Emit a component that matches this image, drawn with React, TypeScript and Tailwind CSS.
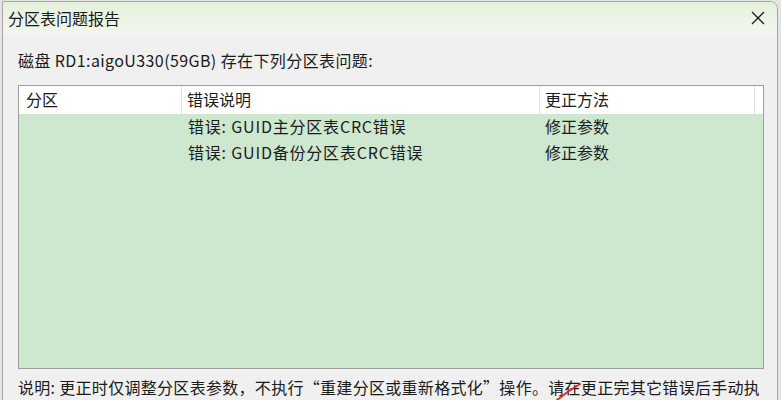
import React from 'react';

const rows = [
  { part: '', desc: '错误: GUID主分区表CRC错误', fix: '修正参数' },
  { part: '', desc: '错误: GUID备份分区表CRC错误', fix: '修正参数' },
];

const font = { fontFamily: '"Noto Sans CJK SC", "Noto Sans", sans-serif' };

const App: React.FC = () => {
  return (
    <div className="w-[781px] h-[400px] bg-[#e4e4e4] pl-[2px] pt-[1px] overflow-hidden relative" style={font}>
      <div className="w-[776px] h-[420px] flex flex-col bg-[#f0f0f0] border border-[#a6a6a6] rounded-tr-[8px] overflow-hidden text-[#1b1b1b]">
        {/* Title bar */}
        <div className="h-[32px] shrink-0 flex items-center justify-between pl-[5px] pr-[12px] bg-gradient-to-b from-[#e5f2da] to-[#f2f6ee]">
          <span className="text-[16px] leading-none">分区表问题报告</span>
          <svg width="14" height="14" viewBox="0 0 14 14" className="text-[#1b1b1b]">
            <path d="M1 1 L13 13 M13 1 L1 13" stroke="currentColor" strokeWidth="1.3" fill="none" />
          </svg>
        </div>

        {/* Body */}
        <div className="flex flex-col px-[15px] pt-[14px]">
          <p className="text-[16px] leading-[24px] tracking-[0.4px]">磁盘 RD1:aigoU330(59GB) 存在下列分区表问题:</p>

          <div className="mt-[13px] w-[746px] h-[284px] border border-[#9e9e9e] bg-[#cde8cf] flex flex-col">
            <div className="h-[28px] flex bg-white text-[16px] leading-[27px]">
              <div className="w-[163px] pl-[7px] border-r border-[#e3e3e3]">分区</div>
              <div className="w-[358px] pl-[5px] border-r border-[#e3e3e3]">错误说明</div>
              <div className="w-[215px] pl-[5px] border-r border-[#e3e3e3]">更正方法</div>
              <div className="flex-1" />
            </div>
            {rows.map((r, i) => (
              <div key={i} className="h-[26px] flex text-[16px] leading-[24px]">
                <div className="w-[163px] pl-[7px]">{r.part}</div>
                <div className="w-[358px] pl-[6px] tracking-[0.8px]">{r.desc}</div>
                <div className="w-[215px] pl-[5px]">{r.fix}</div>
              </div>
            ))}
          </div>

          <p className="mt-[6px] w-[741px] overflow-hidden text-[16px] leading-[24px] whitespace-nowrap tracking-[0.3px]">
            说明: 更正时仅调整分区表参数，不执行“重建分区或重新格式化”操作。请在更正完其它错误后手动执行
          </p>
        </div>
      </div>

      {/* red annotation stroke */}
      <svg className="absolute left-[552px] top-[380px]" width="32" height="20" viewBox="0 0 32 20">
        <path d="M5 20 Q16 11 28 4" stroke="#e0281e" strokeWidth="2" fill="none" strokeLinecap="round" />
      </svg>
    </div>
  );
};

export default App;
